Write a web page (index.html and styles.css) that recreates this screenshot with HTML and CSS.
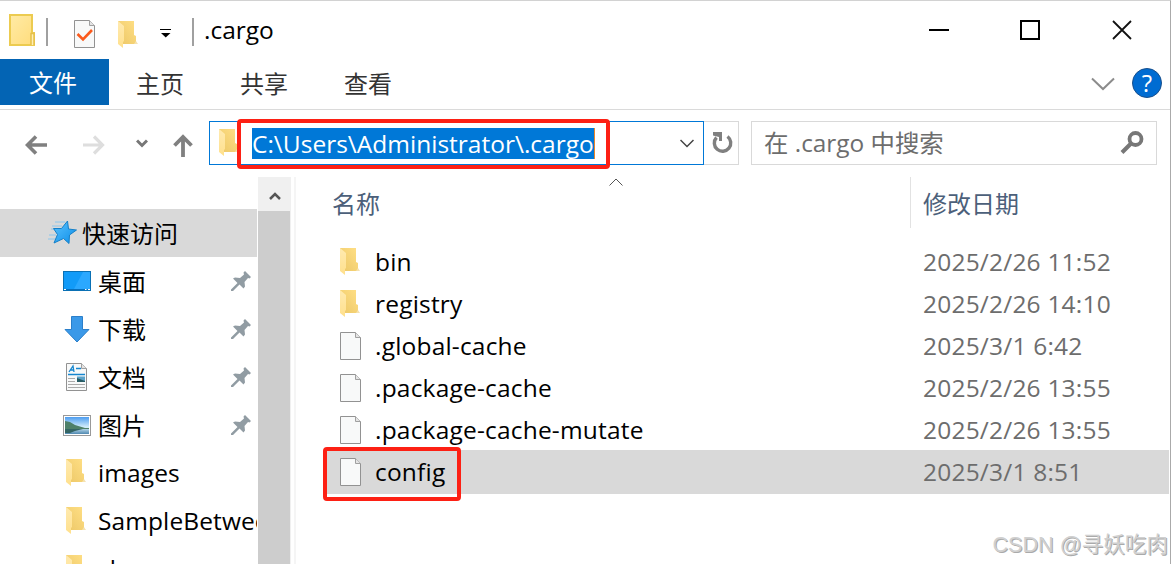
FILE: index.html
```html
<!DOCTYPE html>
<html lang="zh-CN">
<head>
    <meta charset="UTF-8">
    <meta name="viewport" content="width=device-width, initial-scale=1.0">
    <title>.cargo</title>
    <link rel="stylesheet" href="styles.css">
</head>
<body>
    <svg class="defs" width="0" height="0">
        <defs>
            <linearGradient id="fold-back" x1="0" y1="1" x2="1" y2="0">
                <stop offset="0" stop-color="#ecc767"/>
                <stop offset="1" stop-color="#ffdf85"/>
            </linearGradient>
            <linearGradient id="fold-front" x1="0" y1="0" x2="0" y2="1">
                <stop offset="0" stop-color="#ffeab0"/>
                <stop offset="1" stop-color="#ffe08c"/>
            </linearGradient>
            <linearGradient id="big-fold" x1="0" y1="0" x2="1" y2="1">
                <stop offset="0" stop-color="#ffeba6"/>
                <stop offset="1" stop-color="#ffdc7b"/>
            </linearGradient>
            <linearGradient id="sky" x1="0" y1="0" x2="0" y2="1">
                <stop offset="0" stop-color="#4d9df0"/>
                <stop offset="0.6" stop-color="#d5eefb"/>
                <stop offset="1" stop-color="#4f88b0"/>
            </linearGradient>
            <linearGradient id="blue" x1="0" y1="0" x2="1" y2="1">
                <stop offset="0" stop-color="#5bc3ff"/>
                <stop offset="1" stop-color="#0b8de8"/>
            </linearGradient>
        </defs>
        <symbol id="folder" viewBox="0 0 20 28">
            <path d="M0 0H16V14L18 15V23H5L0 22Z" fill="url(#fold-back)"/>
            <path d="M18 20L20 23H16Z" fill="#f5e2b0"/>
            <path d="M0 0L6 5V20L5 21V27L0 23Z" fill="url(#fold-front)"/>
        </symbol>
        <symbol id="file" viewBox="0 0 22 28">
            <path d="M0.5 0.5H15.5L20.5 5.5V27.5H0.5Z" fill="#f8f9f9" stroke="#929292"/>
            <path d="M15.5 0.5V5.5H20.5" fill="#e4e4e4" stroke="#a0a0a0"/>
        </symbol>
        <symbol id="pin" viewBox="0 0 20 20">
            <path d="M14 0L20 6L18.5 7.5L17 7L13.5 11L14 15.5L12.5 17.5L8.500 13.500L2 20L0 20L0 18.500L6.500 12L2 7.500L4 6.500L9 7L13 3.500L12.500 1.500Z" fill="#919ca3"/>
        </symbol>
    </svg>

    <div class="window">
        <header class="titlebar">
            <svg class="app-icon" width="27" height="33" viewBox="0 0 27 33">
                <path d="M1 1H23V19H25V31H1Z" fill="url(#big-fold)" stroke="#eccb50" stroke-width="2"/>
                <path d="M22 31V19.5H25V31" fill="#fff0b5" stroke="#e6c04a" stroke-width="1.5"/>
            </svg>
            <span class="divider"></span>
            <svg class="check-icon" width="22" height="28"><use href="#file"/><path d="M3.5 14L9 19.5L18 10" fill="none" stroke="#fb5a1c" stroke-width="2.6"/></svg>
            <svg class="quick-folder" width="20" height="28"><use href="#folder"/></svg>
            <svg class="customize" width="12" height="10" viewBox="0 0 12 10"><path d="M0 0.5H11" stroke="#000"/><path d="M1 4H10.5L5.75 8.5Z"/></svg>
            <span class="divider"></span>
            <h1>.cargo</h1>
            <div class="controls">
                <svg width="20" height="20"><path d="M0 10H20" stroke="#000" stroke-width="2"/></svg>
                <svg width="20" height="20"><rect x="1" y="1" width="18" height="18" fill="none" stroke="#000" stroke-width="2"/></svg>
                <svg width="20" height="20"><path d="M1 1L19 19M19 1L1 19" stroke="#111" stroke-width="1.8"/></svg>
            </div>
        </header>

        <nav class="ribbon">
            <span class="tab active">文件</span>
            <span class="tab">主页</span>
            <span class="tab">共享</span>
            <span class="tab">查看</span>
            <svg class="expand" width="24" height="14"><path d="M1 1.5L12 12L23 1.5" fill="none" stroke="#8c8c8c" stroke-width="2"/></svg>
            <span class="help">?</span>
        </nav>

        <div class="toolbar">
            <div class="arrows">
                <svg width="22" height="20"><path d="M22 10H2M11 1.5L2.5 10L11 18.5" fill="none" stroke="#808080" stroke-width="3.6"/></svg>
                <svg width="22" height="20"><path d="M0 10H20M11 1.5L19.5 10L11 18.5" fill="none" stroke="#dedede" stroke-width="3.2"/></svg>
                <svg width="12" height="9"><path d="M1 1.5L6 6.5L11 1.5" fill="none" stroke="#777" stroke-width="3"/></svg>
                <svg width="20" height="23"><path d="M10 23V3M1.5 11.5L10 3L18.5 11.5" fill="none" stroke="#808080" stroke-width="3.8"/></svg>
            </div>
            <div class="address">
                <svg width="20" height="28"><use href="#folder"/></svg>
                <span class="path">C:\Users\Administrator\.cargo</span>
                <svg class="drop" width="14" height="9"><path d="M0.5 1L7 7.5L13.5 1" fill="none" stroke="#444" stroke-width="1.5"/></svg>
                <span class="mark mark-path"></span>
            </div>
            <div class="refresh">
                <svg width="21" height="22" viewBox="0 0 21 22"><path d="M15.5 4.5A8.2 8.2 0 1 1 4.5 5.5" fill="none" stroke="#808080" stroke-width="3.4"/><path d="M1 0H10V9H7V5L1 3.5Z" fill="#808080"/></svg>
            </div>
            <div class="search">
                <span>在 .cargo 中搜索</span>
                <svg width="24" height="24"><circle cx="15.5" cy="8" r="6" fill="none" stroke="#777" stroke-width="3.8"/><path d="M11 12.5L2 21.5" stroke="#777" stroke-width="4"/></svg>
            </div>
        </div>

        <div class="content">
            <aside class="sidebar">
                <div class="item quick">
                    <svg width="30" height="26" viewBox="0 0 30 26"><path d="M7 2H17M4 6H14M3 9H10M1 15H8M0 19H7" stroke="#8cc6ec"/><path d="M19.5 1L20.5 9L28.5 10L21.5 15L21 23.5L15.500 18.500L6 23L9.500 14.500L5.500 8.500H13.500Z" fill="url(#blue)" stroke="#1580c8"/></svg>
                    <span>快速访问</span>
                </div>
                <div class="item">
                    <svg class="icon" width="28" height="20"><rect x="0.5" y="0.5" width="27" height="19" fill="#129bf8" stroke="#0a70b4"/><path d="M11 18L20 1H27V18Z" fill="#2ba8ff"/><path d="M1 18.5H27" stroke="#086fbc"/><path d="M1 18.5H3M22 18.5H23.5M25 18.5H27" stroke="#fff"/></svg>
                    <span>桌面</span>
                    <svg class="pin" width="20" height="20"><use href="#pin"/></svg>
                </div>
                <div class="item">
                    <svg class="icon" width="28" height="27"><path d="M8.5 0.5H19.5V13.5H26L14 26L2 13.5H8.5Z" fill="#3b99e8" stroke="#2b7fca"/></svg>
                    <span>下载</span>
                    <svg class="pin" width="20" height="20"><use href="#pin"/></svg>
                </div>
                <div class="item">
                    <svg class="icon" width="28" height="28"><use href="#file" x="3" width="22" height="28"/><path d="M6 9L10 3L11 9M7 7H11M13 5.5H18M5 11.5H22" fill="none" stroke="#1686cf" stroke-width="1.3"/><path d="M5 15.5H12M5 18.5H12M5 21.5H22M5 24.5H22" stroke="#aaa"/><path d="M14 13.5H22V19H14Z" fill="#5ba3ca"/><path d="M14 15L22 18V19H14Z" fill="#275b63"/></svg>
                    <span>文档</span>
                    <svg class="pin" width="20" height="20"><use href="#pin"/></svg>
                </div>
                <div class="item">
                    <svg class="icon" width="28" height="21"><rect x="0.5" y="0.5" width="27" height="20" fill="#fff" stroke="#999"/><path d="M2 2H26V19H2Z" fill="url(#sky)"/><path d="M2 6L7 7L12 10L22 13H26V14H2Z" fill="#4e8069"/><path d="M2 14H20L12 16L7 18L2 18Z" fill="#346564"/></svg>
                    <span>图片</span>
                    <svg class="pin" width="20" height="20"><use href="#pin"/></svg>
                </div>
                <div class="item">
                    <svg class="icon folder" width="20" height="28"><use href="#folder"/></svg>
                    <span class="latin">images</span>
                </div>
                <div class="item">
                    <svg class="icon folder" width="20" height="28"><use href="#folder"/></svg>
                    <span class="latin">SampleBetween</span>
                </div>
                <div class="item">
                    <svg class="icon folder" width="20" height="28"><use href="#folder"/></svg>
                    <span class="latin">sh</span>
                </div>
            </aside>
            <div class="scrollbar">
                <div class="scroll-up"><svg width="12" height="10"><path d="M1 8L6 3L11 8" fill="none" stroke="#555" stroke-width="2.5"/></svg></div>
                <div class="thumb"></div>
            </div>

            <main class="files">
                <div class="columns">
                    <span class="name">名称</span>
                    <svg class="sort" width="14" height="8"><path d="M0.5 7.5L7 1L13.5 7.5" fill="none" stroke="#555"/></svg>
                    <span class="date">修改日期</span>
                </div>
                <div class="row">
                    <svg width="22" height="28"><use href="#folder" width="20"/></svg>
                    <span class="name">bin</span>
                    <span class="date">2025/2/26 11:52</span>
                </div>
                <div class="row">
                    <svg width="22" height="28"><use href="#folder" width="20"/></svg>
                    <span class="name">registry</span>
                    <span class="date">2025/2/26 14:10</span>
                </div>
                <div class="row">
                    <svg width="22" height="28"><use href="#file"/></svg>
                    <span class="name">.global-cache</span>
                    <span class="date">2025/3/1 6:42</span>
                </div>
                <div class="row">
                    <svg width="22" height="28"><use href="#file"/></svg>
                    <span class="name">.package-cache</span>
                    <span class="date">2025/2/26 13:55</span>
                </div>
                <div class="row">
                    <svg width="22" height="28"><use href="#file"/></svg>
                    <span class="name">.package-cache-mutate</span>
                    <span class="date">2025/2/26 13:55</span>
                </div>
                <div class="row selected">
                    <svg width="22" height="28"><use href="#file"/></svg>
                    <span class="name">config</span>
                    <span class="date">2025/3/1 8:51</span>
                    <span class="mark mark-config"></span>
                </div>
            </main>
        </div>
        <div class="watermark">CSDN @寻妖吃肉</div>
    </div>
</body>
</html>
```
FILE: styles.css
```css
* {
    box-sizing: border-box;
}

body {
    margin: 0;
    background-color: white;
    color: black;
    font-family: "Open Sans", "Noto Sans CJK SC", sans-serif;
    font-size: 24px;
    line-height: 32px;
}

svg {
    display: block;
    flex-shrink: 0;
}

.defs {
    position: absolute;
}

.window {
    position: relative;
    width: 1171px;
    height: 564px;
    overflow: hidden;
    display: flex;
    flex-direction: column;
    border-top: 1px solid #d2d2d2;
    border-right: 1px solid #aaa;
    white-space: nowrap;
}

.titlebar {
    height: 58px;
    flex-shrink: 0;
    display: flex;
    align-items: center;
    padding-left: 9px;
}

.divider {
    width: 2px;
    height: 28px;
    background-color: #a0a0a0;
    margin-left: 10px;
    margin-top: 4px;
}

.check-icon {
    margin-left: 26px;
    margin-top: 7px;
}

.quick-folder {
    margin-left: 22px;
    margin-top: 9px;
}

.customize {
    margin-left: 22px;
    margin-top: 7px;
}

.customize + .divider {
    margin-left: 20px;
}

h1 {
    margin: 0 0 0 10px;
    font-size: 24.5px;
    font-weight: normal;
}

.controls {
    margin-left: auto;
    margin-right: 38px;
    display: flex;
    gap: 72px;
}

.controls svg:first-child {
    margin-right: -1px;
}

.ribbon {
    height: 51px;
    flex-shrink: 0;
    display: flex;
    align-items: flex-start;
    border-bottom: 1px solid #dadada;
}

.tab {
    width: 104px;
    height: 46px;
    line-height: 50px;
    text-align: center;
    padding-right: 2px;
    color: #333;
}

.tab.active {
    width: 109px;
    line-height: 47px;
    padding-right: 3px;
    background-color: #0364b4;
    color: white;
}

.expand {
    margin-left: auto;
    margin-top: 18px;
}

.help {
    width: 30px;
    height: 30px;
    margin: 9px 8px 0 17px;
    border: 1px solid #184f8c;
    border-radius: 50%;
    background-color: #006cd2;
    color: white;
    line-height: 28px;
    text-align: center;
}

.toolbar {
    height: 67px;
    flex-shrink: 0;
    display: flex;
    padding-top: 11px;
}

.arrows {
    width: 209px;
    height: 44px;
    display: flex;
    align-items: center;
    padding-left: 25px;
}

.arrows svg:nth-child(1) {
    margin-top: 3px;
}

.arrows svg:nth-child(2) {
    margin-left: 36px;
    margin-top: 3px;
}

.arrows svg:nth-child(3) {
    margin-left: 31px;
    margin-top: 1px;
}

.arrows svg:nth-child(4) {
    margin-left: 25px;
    margin-top: 4px;
}

.address {
    position: relative;
    width: 495px;
    height: 44px;
    display: flex;
    align-items: center;
    border: 1px solid #0078d7;
    padding: 0 9px;
}

.path {
    height: 31px;
    line-height: 31px;
    margin-left: 13px;
    margin-top: 1px;
    background-color: #0078d7;
    color: white;
    font-size: 24.5px;
    border-right: 1px solid #e8852a;
}

.drop {
    margin-left: auto;
}

/* red highlight frames */
.mark {
    position: absolute;
    border: 4px solid #fd2014;
    border-radius: 4px;
}

.mark-path {
    left: 27px;
    top: -3px;
    width: 373px;
    height: 50px;
}

.mark-config {
    left: -2px;
    top: -3px;
    width: 138px;
    height: 54px;
}

.refresh {
    width: 35px;
    height: 44px;
    display: flex;
    align-items: center;
    justify-content: center;
    padding-left: 2px;
    border: 1px solid #d9d9d9;
    border-left: none;
}

.search {
    width: 406px;
    height: 44px;
    margin-left: 12px;
    padding: 0 12px;
    display: flex;
    align-items: center;
    justify-content: space-between;
    border: 1px solid #d9d9d9;
    font-size: 24.4px;
    color: #6d6d6d;
}

.content {
    flex: 1 1 0;
    min-height: 0;
    display: flex;
}

.sidebar {
    width: 257px;
    padding-top: 32px;
    overflow: hidden;
}

.item {
    height: 48px;
    display: flex;
    align-items: center;
    padding: 0 6px 0 63px;
}

.item span {
    margin-left: 7px;
    margin-top: 2px;
}

.item.quick {
    padding-left: 48px;
    background-color: #d9d9d9;
}

.item.quick span {
    margin-left: 4px;
}

.item .folder {
    margin-left: 3px;
}

.item .latin {
    margin-left: 12px;
    margin-top: 0;
    font-size: 24.5px;
    letter-spacing: 0.1px;
}

.item .pin {
    margin-left: auto;
}

.scrollbar {
    width: 33px;
    margin-left: 1px;
    display: flex;
    flex-direction: column;
    background-color: #f0f0f0;
}

.scroll-up {
    height: 34px;
    display: flex;
    align-items: center;
    justify-content: center;
    padding-top: 3px;
}

.thumb {
    width: 32px;
    flex-grow: 1;
    background-color: #cdcdcd;
}

.files {
    width: 875px;
    margin-left: 3px;
    border-left: 2px solid #f5f5f5;
}

.columns {
    position: relative;
    height: 51px;
    margin-bottom: 13px;
    display: flex;
    line-height: 54px;
    color: #4c607a;
}

.columns .name {
    width: 614px;
    padding-left: 36px;
}

.columns .date {
    padding-left: 12px;
    border-left: 1px solid #e2e2e2;
}

.sort {
    position: absolute;
    left: 313px;
    top: 1px;
}

.row {
    position: relative;
    height: 42px;
    display: flex;
    align-items: center;
    margin-left: 29px;
    padding-left: 15px;
    font-size: 24.5px;
    letter-spacing: 0.2px;
}

.row .name {
    width: 548px;
    margin-left: 13px;
}

.row .date {
    color: #6d6d6d;
}

.row.selected {
    height: 44px;
    margin-top: -1px;
    background-color: #d9d9d9;
}

.watermark {
    position: absolute;
    right: 2px;
    bottom: 3px;
    font-family: "Liberation Sans", "Noto Sans CJK SC", sans-serif;
    font-size: 21.6px;
    color: #d0d0d0;
    text-shadow: 1px 1px 0 #aaa;
}
```
